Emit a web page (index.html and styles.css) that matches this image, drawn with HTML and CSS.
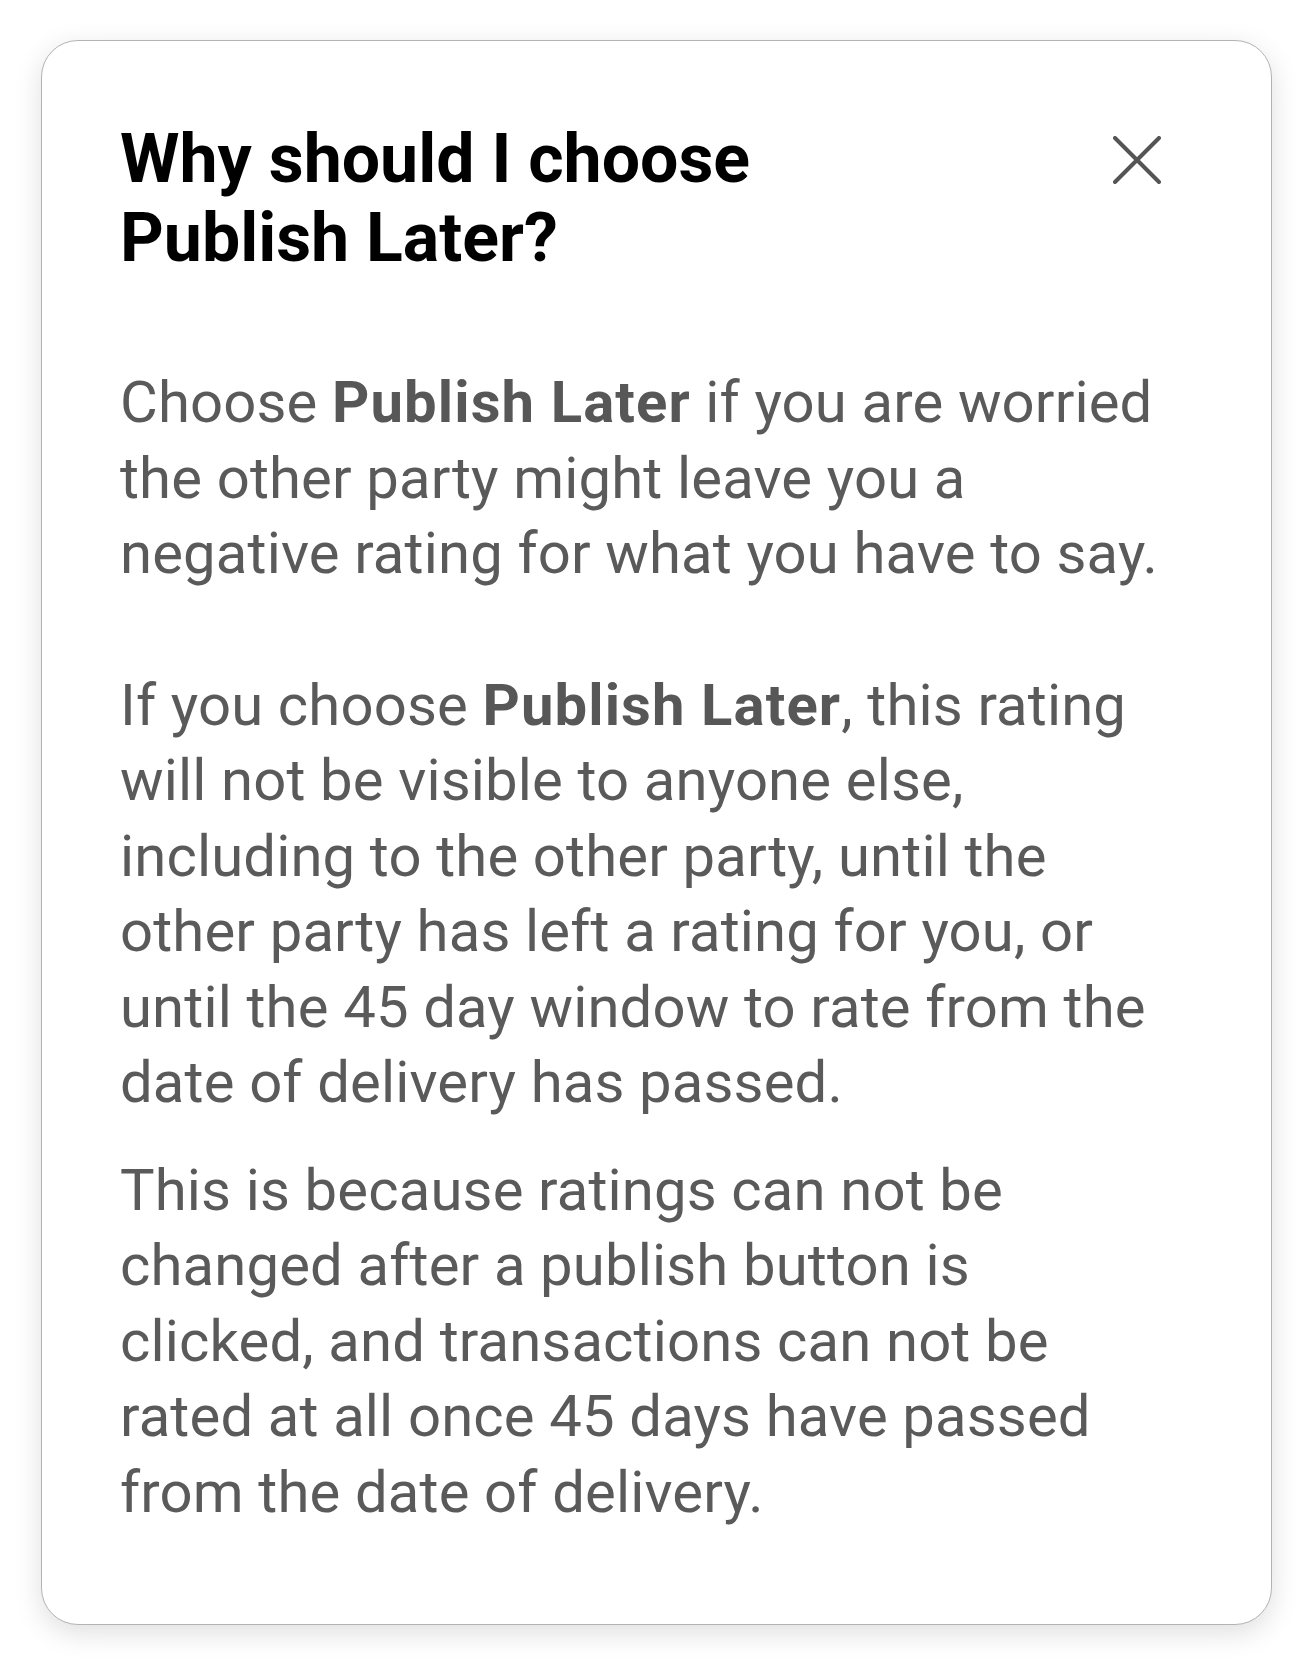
FILE: index.html
```html
<!DOCTYPE html>
<html lang="en">
<head>
<meta charset="utf-8">
<title>Why should I choose Publish Later?</title>
<link rel="stylesheet" href="styles.css">
</head>
<body>
<div class="card">
  <div class="header">
    <h1 class="title">Why should I choose Publish Later?</h1>
    <button class="close" aria-label="Close">
      <svg width="48" height="48" viewBox="0 0 48 48" fill="none" stroke="#555" stroke-width="4" stroke-linecap="round">
        <path d="M2 2 L46 46 M46 2 L2 46"/>
      </svg>
    </button>
  </div>
  <p class="para first">Choose <b>Publish Later</b> if you are worried the other party might leave you a negative rating for what you have to say.</p>
  <p class="para second">If you choose <b>Publish Later</b>, this rating will not be visible to anyone else, including to the other party, until the other party has left a rating for you, or until the 45 day window to rate from the date of delivery has passed.</p>
  <p class="para third">This is because ratings can not be changed after a publish button is clicked, and transactions can not be rated at all once 45 days have passed from the date of delivery.</p>
</div>
</body>
</html>
```
FILE: styles.css
```css
html, body {
  margin: 0;
  padding: 0;
  background: #ffffff;
}
body {
  padding: 40px 41px 41px 41px;
  font-family: Roboto, "Liberation Sans", sans-serif;
}
.card {
  box-sizing: border-box;
  width: 1231px;
  height: 1585px;
  background: #ffffff;
  border: 1.5px solid #b3b3b3;
  border-radius: 37px;
  box-shadow: 0 8px 28px rgba(0, 0, 0, 0.13);
  padding: 79px 102px 0 78px;
}
.header {
  display: flex;
  align-items: flex-start;
  justify-content: space-between;
}
.title {
  margin: 0;
  width: 800px;
  font-size: 68px;
  line-height: 79px;
  font-weight: 700;
  color: #000000;
}
.close {
  margin: 16px 8px 0 0;
  padding: 0;
  border: none;
  background: transparent;
  width: 48px;
  height: 48px;
  display: flex;
}
.para {
  margin: 0;
  font-size: 58px;
  line-height: 75.5px;
  letter-spacing: 0.15px;
  color: #5a5a5a;
}
.para b {
  font-weight: 700;
  letter-spacing: 1.1px;
  color: #575757;
}
.first {
  margin-top: 87px;
}
.second {
  margin-top: 76px;
}
.third {
  margin-top: 32px;
}
```
